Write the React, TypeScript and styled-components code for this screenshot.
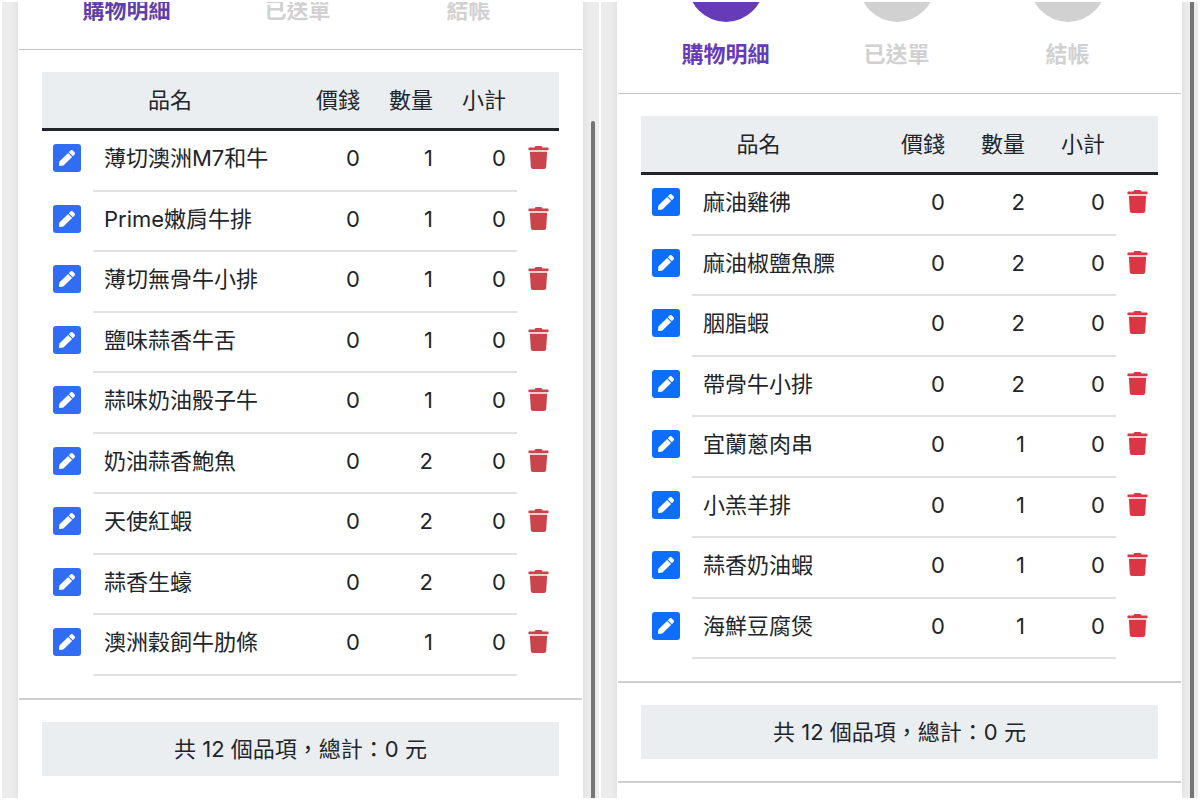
import React from "react";
import styled, { createGlobalStyle } from "styled-components";
import { FaPen, FaTrash } from "react-icons/fa";

const GlobalStyle = createGlobalStyle`
  *, *::before, *::after { box-sizing: border-box; }
  body {
    margin: 0;
    background: #ffffff;
    color: #212529;
    font-family: Inter, "Noto Sans CJK TC", sans-serif;
    font-size: 22px;
    line-height: 32px;
  }
`;

type Palette = { accent: string; edit: string; danger: string };

const Page = styled.main`
  display: grid;
  grid-template-columns: 1fr 1fr;
  gap: 2px;
  padding: 2px;
  height: 100vh;
`;

const Screen = styled.section`
  display: grid;
  grid-template-columns: 16px minmax(0, 1fr) 16px;
  min-height: 0;
  overflow: hidden;
  background: #ececec;
`;

const Card = styled.div<{ $scrolled: number }>`
  grid-column: 2;
  margin-top: ${(p) => -p.$scrolled}px;
  padding: 0 1px;
  background: #ffffff;
  box-shadow: 0 0 8px rgba(0, 0, 0, 0.08);
`;

const ScrollTrack = styled.div<{ $top: number }>`
  padding: ${(p) => p.$top}px 4px 0 8px;
`;

const ScrollThumb = styled.div<{ $rounded: boolean }>`
  height: 100%;
  border-radius: ${(p) => (p.$rounded ? "2px 2px 0 0" : "0")};
  background: #757575;
`;

const Steps = styled.ol`
  display: grid;
  grid-template-columns: repeat(3, 1fr);
  margin: 0;
  padding: 24px 28px 23px 22px;
  list-style: none;
  border-bottom: 1px solid #c4c4c4;
`;

const Step = styled.li<{ $color: string }>`
  display: flex;
  flex-direction: column;
  align-items: center;
  gap: 16px;
  color: ${(p) => p.$color};
  font-weight: 700;
`;

const StepDot = styled.span`
  width: 76px;
  height: 76px;
  border-radius: 50%;
  background: currentColor;
`;

const Block = styled.div`
  padding: 22px 23px;
  border-bottom: 2px solid #cfcfcf;
`;

const OrderTable = styled.table`
  width: 100%;
  table-layout: fixed;
  border-collapse: separate;
  border-spacing: 0;
`;

const Col = styled.col<{ $width?: number }>`
  width: ${(p) => (p.$width ? `${p.$width}px` : "auto")};
`;

const HeadCell = styled.th<{ $align?: string }>`
  padding: 12px 11px;
  text-align: ${(p) => p.$align ?? "right"};
  font-weight: 400;
  background: #eaeef1;
  border-bottom: 3px solid #212529;
`;

const Row = styled.tr`
  height: 60px;
  vertical-align: top;
  &:nth-child(odd) {
    height: 61px;
  }
`;

const Cell = styled.td<{ $numeric?: boolean }>`
  padding: 11px 11px 0;
  text-align: ${(p) => (p.$numeric ? "right" : "left")};
  border-bottom: 2px solid #e0e1e2;
  white-space: nowrap;
`;

const ActionCell = styled.td`
  padding: 13px 11px 0;
`;

const DeleteCell = styled.td`
  padding: 12px 10px 0;
`;

const EditButton = styled.button<{ $color: string }>`
  display: grid;
  place-items: center;
  width: 28px;
  height: 28px;
  padding: 0;
  border: 0;
  border-radius: 3px;
  background: ${(p) => p.$color};
  color: #ffffff;
  font-size: 16px;
`;

const DeleteButton = styled.button<{ $color: string }>`
  display: grid;
  place-items: center;
  width: 20px;
  height: 28px;
  padding: 0;
  border: 0;
  background: none;
  color: ${(p) => p.$color};
  font-size: 23px;
`;

const Summary = styled.p`
  margin: 0;
  padding: 11px;
  text-align: center;
  background: #eaeef1;
`;

type Item = { name: string; qty: number };

type OrderProps = {
  items: Item[];
  palette: Palette;
  numberWidth: number;
  scrolled: number;
  thumbTop: number;
};

function OrderScreen({ items, palette, numberWidth, scrolled, thumbTop }: OrderProps) {
  return (
    <Screen>
      <Card $scrolled={scrolled}>
        <Steps>
          <Step $color={palette.accent}><StepDot />購物明細</Step>
          <Step $color="#d1d1d1"><StepDot />已送單</Step>
          <Step $color="#d1d1d1"><StepDot />結帳</Step>
        </Steps>
        <Block>
          <OrderTable>
            <colgroup>
              <Col $width={51} />
              <Col />
              <Col $width={numberWidth} />
              <Col $width={numberWidth} />
              <Col $width={numberWidth} />
              <Col $width={42} />
            </colgroup>
            <thead>
              <tr>
                <HeadCell colSpan={2} $align="center">品名</HeadCell>
                <HeadCell>價錢</HeadCell>
                <HeadCell>數量</HeadCell>
                <HeadCell>小計</HeadCell>
                <HeadCell />
              </tr>
            </thead>
            <tbody>
              {items.map((item) => (
                <Row key={item.name}>
                  <ActionCell>
                    <EditButton type="button" $color={palette.edit} aria-label={`編輯 ${item.name}`}>
                      <FaPen />
                    </EditButton>
                  </ActionCell>
                  <Cell>{item.name}</Cell>
                  <Cell $numeric>0</Cell>
                  <Cell $numeric>{item.qty}</Cell>
                  <Cell $numeric>0</Cell>
                  <DeleteCell>
                    <DeleteButton type="button" $color={palette.danger} aria-label={`刪除 ${item.name}`}>
                      <FaTrash />
                    </DeleteButton>
                  </DeleteCell>
                </Row>
              ))}
            </tbody>
          </OrderTable>
        </Block>
        <Block>
          <Summary>共 12 個品項，總計：0 元</Summary>
        </Block>
      </Card>
      <ScrollTrack $top={thumbTop}>
        <ScrollThumb $rounded={thumbTop > 0} />
      </ScrollTrack>
    </Screen>
  );
}

const leftItems: Item[] = [
  { name: "薄切澳洲M7和牛", qty: 1 },
  { name: "Prime嫩肩牛排", qty: 1 },
  { name: "薄切無骨牛小排", qty: 1 },
  { name: "鹽味蒜香牛舌", qty: 1 },
  { name: "蒜味奶油骰子牛", qty: 1 },
  { name: "奶油蒜香鮑魚", qty: 2 },
  { name: "天使紅蝦", qty: 2 },
  { name: "蒜香生蠔", qty: 2 },
  { name: "澳洲穀飼牛肋條", qty: 1 },
];

const rightItems: Item[] = [
  { name: "麻油雞彿", qty: 2 },
  { name: "麻油椒鹽魚膘", qty: 2 },
  { name: "胭脂蝦", qty: 2 },
  { name: "帶骨牛小排", qty: 2 },
  { name: "宜蘭蔥肉串", qty: 1 },
  { name: "小羔羊排", qty: 1 },
  { name: "蒜香奶油蝦", qty: 1 },
  { name: "海鮮豆腐煲", qty: 1 },
];

export default function App() {
  return (
    <>
      <GlobalStyle />
      <Page lang="zh-Hant">
        <OrderScreen
          items={leftItems}
          palette={{ accent: "#5f3fa8", edit: "#316cf4", danger: "#c9444b" }}
          numberWidth={73}
          scrolled={124}
          thumbTop={119}
        />
        <OrderScreen
          items={rightItems}
          palette={{ accent: "#673ab7", edit: "#0d6efd", danger: "#dc3545" }}
          numberWidth={80}
          scrolled={80}
          thumbTop={0}
        />
      </Page>
    </>
  );
}
